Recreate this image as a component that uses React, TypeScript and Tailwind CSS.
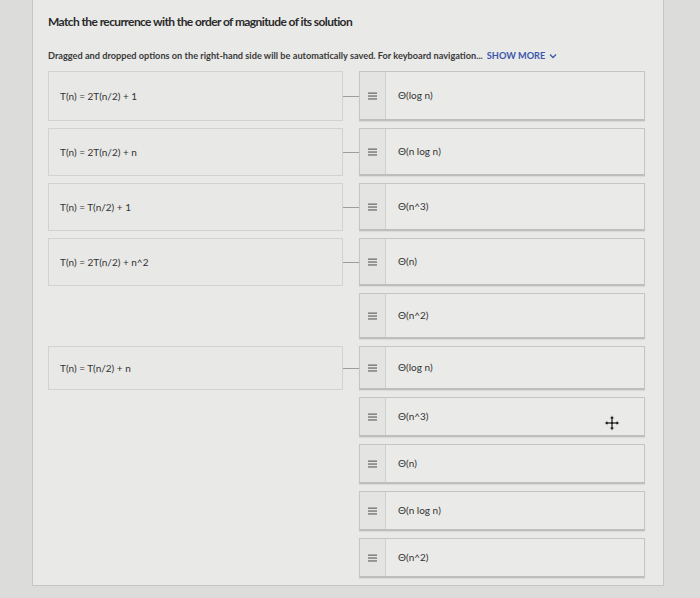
import React from "react";

const font = { fontFamily: '"Liberation Sans Narrow", Lato, "Liberation Sans", sans-serif' };

type Row = { left?: string; right: string; h: string; link?: boolean; cursor?: boolean };

const rows: Row[] = [
    { left: "T(n) = 2T(n/2) + 1", right: "Θ(log n)", h: "h-[50px]", link: true },
    { left: "T(n) = 2T(n/2) + n", right: "Θ(n log n)", h: "h-[48px]", link: true },
    { left: "T(n) = T(n/2) + 1", right: "Θ(n^3)", h: "h-[48px]", link: true },
    { left: "T(n) = 2T(n/2) + n^2", right: "Θ(n)", h: "h-[48px]", link: true },
    { right: "Θ(n^2)", h: "h-[46px]" },
    { left: "T(n) = T(n/2) + n", right: "Θ(log n)", h: "h-[44px]", link: true },
    { right: "Θ(n^3)", h: "h-[40px]", cursor: true },
    { right: "Θ(n)", h: "h-[40px]" },
    { right: "Θ(n log n)", h: "h-[40px]" },
    { right: "Θ(n^2)", h: "h-[40px]" },
];

function Handle() {
    return (
        <svg width="9" height="8" viewBox="0 0 9 8" className="text-[#6f6f6f]">
            <rect x="0" y="0.5" width="9" height="1.3" fill="currentColor" />
            <rect x="0" y="3.4" width="9" height="1.3" fill="currentColor" />
            <rect x="0" y="6.3" width="9" height="1.3" fill="currentColor" />
        </svg>
    );
}

function MoveCursor() {
    return (
        <svg width="16" height="16" viewBox="0 0 14 14">
            <path
                d="M7 0.5 L9.5 3.2 H7.9 V6.1 H10.8 V4.5 L13.5 7 L10.8 9.5 V7.9 H7.9 V10.8 H9.5 L7 13.5 L4.5 10.8 H6.1 V7.9 H3.2 V9.5 L0.5 7 L3.2 4.5 V6.1 H6.1 V3.2 H4.5 Z"
                fill="#1c1c1c"
                stroke="#f4f4f4"
                strokeWidth="0.7"
            />
        </svg>
    );
}

export default function App() {
    return (
        <div className="w-[700px] h-[598px] bg-[#dcdcda] pl-[32px] overflow-hidden" style={font}>
            <div className="w-[632px] h-[586px] bg-[#e9e9e7] border-x border-b border-[#c6c6c4] pl-[15px] pt-[14px]">
                <h1 className="text-[12px] leading-[16px] font-bold tracking-[-0.6px] text-[#2b2b2b]">
                    Match the recurrence with the order of magnitude of its solution
                </h1>

                <p className="mt-[20px] text-[9.2px] leading-[12px] font-bold text-[#3a3a3a] flex items-center">
                    Dragged and dropped options on the right-hand side will be automatically saved. For keyboard navigation...
                    <span className="ml-[4px] text-[#3b57ad] font-bold">SHOW MORE</span>
                    <svg width="8" height="6" viewBox="0 0 8 6" className="ml-[4px]">
                        <path d="M1 1.5 L4 4.5 L7 1.5" fill="none" stroke="#3b57ad" strokeWidth="1.3" />
                    </svg>
                </p>

                <div className="mt-[9px] flex flex-col gap-[7px]">
                    {rows.map((row, i) => (
                        <div key={i} className={`grid grid-cols-[295px_16px_286px] ${row.h}`}>
                            {row.left ? (
                                <div className="border border-[#d2d2d0] bg-[#e8e8e6] flex items-center pl-[11px] text-[10px] text-[#333]">
                                    {row.left}
                                </div>
                            ) : (
                                <div />
                            )}
                            <div className="flex items-center">
                                {row.link && <div className="w-full h-px bg-[#9d9d9b]" />}
                            </div>
                            <div className="relative flex border border-[#c5c5c3] border-b-2 border-b-[#bebebc] bg-[#eaeae8] shadow-[0_1px_1px_rgba(0,0,0,0.06)]">
                                <div className="w-[26px] border-r border-[#d0d0ce] bg-[#e4e4e2] flex items-center justify-center">
                                    <Handle />
                                </div>
                                <div className="flex items-center pl-[12px] text-[10px] text-[#333]">{row.right}</div>
                                {row.cursor && (
                                    <div className="absolute right-[24px] top-[17px]">
                                        <MoveCursor />
                                    </div>
                                )}
                            </div>
                        </div>
                    ))}
                </div>
            </div>
        </div>
    );
}
